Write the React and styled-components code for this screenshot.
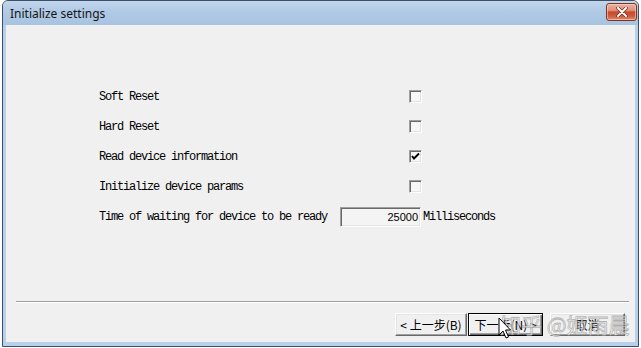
import React from "react";
import styled, { createGlobalStyle, css } from "styled-components";

const GlobalStyle = createGlobalStyle`
  html, body { margin: 0; padding: 0; background: #ffffff; overflow: hidden; }
  body { width: 641px; height: 348px; }
`;

const Window = styled.div`
  position: relative;
  margin-left: 2px;
  width: 637px;
  height: 347px;
  box-sizing: border-box;
  border: 1px solid #3d4f66;
  border-radius: 6px 6px 0 0;
  background: #b9d0ea;
  padding: 0 3px 4px;
  display: flex;
  flex-direction: column;
`;

const TitleBar = styled.div`
  margin: 0 -3px;
  height: 24px;
  flex: none;
  display: flex;
  align-items: flex-start;
  justify-content: space-between;
  padding: 0 1px 0 7px;
  border-radius: 5px 5px 0 0;
  background: linear-gradient(to bottom, #c3d7ed 0%, #b1cae6 40%, #a8c3e1 100%);
`;

const Title = styled.span`
  font-family: "Noto Sans", "Open Sans", sans-serif;
  font-size: 12px;
  line-height: 16px;
  margin-top: 5px;
  color: #141414;
`;

const CloseButton = styled.div`
  margin-top: 2px;
  width: 31px;
  height: 18px;
  box-sizing: border-box;
  border: 1px solid #7c3424;
  border-radius: 3px;
  background: linear-gradient(
    to bottom,
    #eab2a2 0%,
    #e0907a 40%,
    #c9482c 50%,
    #cf5a3c 75%,
    #e08a6c 100%
  );
  box-shadow: inset 0 0 0 1px rgba(255, 220, 200, 0.55);
  display: flex;
  align-items: center;
  justify-content: center;
`;

const Client = styled.div`
  flex: 1;
  background: #f0f0f0;
  display: flex;
  flex-direction: column;
`;

const Main = styled.div`
  height: 276px;
  box-sizing: border-box;
  padding: 57px 0 0 93px;
  display: flex;
  flex-direction: column;
`;

const Row = styled.div`
  height: 30px;
  display: flex;
  align-items: center;
`;

const Label = styled.span`
  font-family: "Liberation Mono", "Courier New", monospace;
  font-size: 12px;
  letter-spacing: -1.2px;
  color: #000;
  white-space: pre;
  ${(p) => p.$width && css`width: ${p.$width}px;`}
  ${(p) => p.$gap && css`margin-right: ${p.$gap}px;`}
`;

const sunken = css`
  box-sizing: border-box;
  border-style: solid;
  border-width: 1px;
  border-color: #a0a0a0 #ffffff #ffffff #a0a0a0;
  box-shadow: inset 1px 1px 0 #696969, inset -1px -1px 0 #e3e3e3;
`;

const Box = styled.span`
  ${sunken};
  width: 13px;
  height: 13px;
  margin-top: -1px;
  background: #f7f7f7;
  display: flex;
  align-items: center;
  justify-content: center;
`;

const NumberField = styled.div`
  ${sunken};
  width: 81px;
  height: 20px;
  background: #f4f4f4;
  font-family: "Liberation Sans", Arial, sans-serif;
  font-size: 11px;
  color: #000;
  display: flex;
  align-items: center;
  justify-content: flex-end;
  padding-right: 2px;
  margin-right: 2px;
`;

const Separator = styled.div`
  height: 0;
  margin: 0 6px 0 10px;
  border-top: 1px solid #a0a0a0;
  border-bottom: 1px solid #ffffff;
`;

const ButtonBar = styled.div`
  display: flex;
  justify-content: flex-end;
  padding: 10px 10px 0 0;
`;

const Button = styled.div`
  height: 23px;
  width: ${(p) => p.$w || 75}px;
  margin-left: ${(p) => p.$ml || 0}px;
  box-sizing: border-box;
  background: #f0f0f0;
  border: 1px solid;
  border-color: #ffffff #696969 #696969 #ffffff;
  box-shadow: inset -1px -1px 0 #a0a0a0, inset 1px 1px 0 #e3e3e3;
  font-family: "Noto Sans CJK SC", "Noto Sans", sans-serif;
  font-size: 12px;
  color: #000;
  display: flex;
  align-items: center;
  justify-content: center;
  white-space: pre;
  ${(p) =>
    p.$default &&
    css`
      border-color: #000;
      box-shadow: inset 1px 1px 0 #ffffff, inset -1px -1px 0 #696969,
        inset -2px -2px 0 #a0a0a0;
    `}
`;

const Watermark = styled.div`
  position: absolute;
  left: 497px;
  top: 310px;
  font-family: "Noto Sans CJK SC", sans-serif;
  font-size: 21px;
  line-height: 26px;
  white-space: pre;
  color: rgba(255, 255, 255, 0.7);
  -webkit-text-stroke: 0.8px rgba(110, 110, 110, 0.5);
  pointer-events: none;
`;

const Cursor = styled.svg`
  position: absolute;
  left: 495px;
  top: 316px;
  pointer-events: none;
`;

function Check({ checked }) {
  return (
    <Box>
      {checked && (
        <svg width="9" height="9" viewBox="0 0 9 9">
          <path d="M1 4 L3 6.5 L8 1.5" fill="none" stroke="#000" strokeWidth="1.9" />
        </svg>
      )}
    </Box>
  );
}

const options = [
  { label: "Soft Reset", checked: false },
  { label: "Hard Reset", checked: false },
  { label: "Read device information", checked: true },
  { label: "Initialize device params", checked: false },
];

export default function App() {
  return (
    <>
      <GlobalStyle />
      <Window>
        <TitleBar>
          <Title>Initialize settings</Title>
          <CloseButton>
            <svg width="12" height="10" viewBox="0 0 12 10">
              <path d="M2 1 L10 9 M10 1 L2 9" stroke="#6b2a1c" strokeWidth="3.4" strokeLinecap="round" />
              <path d="M2 1 L10 9 M10 1 L2 9" stroke="#ffffff" strokeWidth="2" strokeLinecap="round" />
            </svg>
          </CloseButton>
        </TitleBar>
        <Client>
          <Main>
            {options.map((o) => (
              <Row key={o.label}>
                <Label $width={310}>{o.label}</Label>
                <Check checked={o.checked} />
              </Row>
            ))}
            <Row>
              <Label $gap={13}>Time of waiting for device to be ready</Label>
              <NumberField>25000</NumberField>
              <Label>Milliseconds</Label>
            </Row>
          </Main>
          <Separator />
          <ButtonBar>
            <Button $w={72}>{"< 上一步(B)"}</Button>
            <Button $w={75} $ml={1} $default>{"下一步(N) >"}</Button>
            <Button $w={75} $ml={7}>取消</Button>
          </ButtonBar>
        </Client>
        <Watermark>{"知乎 @姬雨晨"}</Watermark>
        <Cursor width="14" height="24" viewBox="0 0 14 24">
          <path
            d="M1 1 L1 18 L5 14 L8 21 L10.5 20 L7.5 13 L12.5 13 Z"
            fill="#ffffff"
            stroke="#000000"
            strokeWidth="1"
            strokeLinejoin="miter"
          />
        </Cursor>
      </Window>
    </>
  );
}
